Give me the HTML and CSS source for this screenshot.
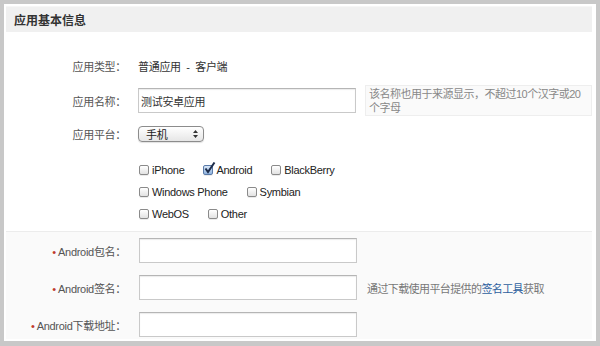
FILE: index.html
```html
<!DOCTYPE html>
<html lang="zh-CN">
<head>
 <meta charset="UTF-8">
 <title>应用基本信息</title>
 <link rel="stylesheet" href="styles.css">
</head>
<body>
 <div class="panel">
  <div class="panel-title">应用基本信息</div>

  <!-- basic info -->
  <div class="section basic">
   <div class="row row-type">
    <span class="label">应用类型：</span>
    <span class="value">普通应用&nbsp; - &nbsp;客户端</span>
   </div>
   <div class="row row-name">
    <span class="label">应用名称：</span>
    <input class="text-input" type="text" value="测试安卓应用">
    <div class="tip">该名称也用于来源显示，不超过10个汉字或20个字母</div>
   </div>
   <div class="row row-platform">
    <span class="label">应用平台：</span>
    <div class="select-box">
     <span>手机</span>
     <svg width="5" height="8" viewBox="0 0 5 8"><path d="M0 3 L2.5 0 L5 3 Z M0 5 L2.5 8 L5 5 Z" fill="#333"/></svg>
    </div>
   </div>
   <div class="platforms">
    <div class="cb-row">
     <label class="cb"><span class="box"></span>iPhone</label>
     <label class="cb"><span class="box checked"><svg width="13" height="13" viewBox="0 0 13 13"><path d="M2.5 6.5 L5 10 L11.5 0.5" fill="none" stroke="#1d2c4a" stroke-width="2"/></svg></span>Android</label>
     <label class="cb"><span class="box"></span>BlackBerry</label>
    </div>
    <div class="cb-row">
     <label class="cb"><span class="box"></span>Windows Phone</label>
     <label class="cb"><span class="box"></span>Symbian</label>
    </div>
    <div class="cb-row">
     <label class="cb"><span class="box"></span>WebOS</label>
     <label class="cb"><span class="box"></span>Other</label>
    </div>
   </div>
  </div>

  <!-- android specific -->
  <div class="section android">
   <div class="row">
    <span class="label"><i class="req">•</i> Android包名：</span>
    <input class="text-input" type="text">
   </div>
   <div class="row">
    <span class="label"><i class="req">•</i> Android签名：</span>
    <input class="text-input" type="text">
    <span class="note">通过下载使用平台提供的<a href="#" class="link">签名工具</a>获取</span>
   </div>
   <div class="row">
    <span class="label"><i class="req">•</i> Android下载地址：</span>
    <input class="text-input" type="text">
   </div>
  </div>
 </div>
</body>
</html>
```

FILE: styles.css
```css
:root {
 --frame-color: #c8c8c8;
 --label-color: #555555;
 --text-color: #333333;
 --hint-color: #888888;
 --link-color: #2d5f9e;
}

html,
body {
 margin: 0;
 padding: 0;
}

body {
 font-family: "Liberation Sans", "Noto Sans CJK SC", sans-serif;
 font-size: 11px;
 letter-spacing: -0.3px;
 color: var(--text-color);
 background: #ffffff;
}

.panel {
 width: 600px;
 height: 346px;
 box-sizing: border-box;
 border: 4px solid var(--frame-color);
 border-bottom-width: 5px;
 padding: 2px 4px 2px 2px;
 background: #ffffff;
 display: flex;
 flex-direction: column;
}

.panel-title {
 height: 26px;
 box-sizing: border-box;
 padding-left: 8px;
 background: #f0f0f0;
 border-top: 1px solid #f6f6f6;
 font-size: 12px;
 font-weight: 700;
 letter-spacing: 0;
 color: #333333;
 display: flex;
 align-items: center;
}

.section {
 display: flex;
 flex-direction: column;
}

.basic {
 height: 199px;
 box-sizing: border-box;
 padding-top: 22px;
}

.row {
 display: flex;
 align-items: center;
}

.label {
 width: 120px;
 flex-shrink: 0;
 margin-right: 12px;
 text-align: right;
 color: var(--label-color);
 white-space: nowrap;
}

.row-type {
 height: 24px;
}

.row-name {
 margin-top: 7px;
 height: 31px;
}

.row-platform {
 margin-top: 10px;
 height: 16px;
}

.text-input {
 width: 218px;
 height: 25px;
 box-sizing: border-box;
 margin: 0;
 padding: 0 2px;
 border: 1px solid #c9c9c9;
 border-top-color: #b5b5b5;
 box-shadow: inset 0 1px 1px rgba(0, 0, 0, 0.08);
 background: #ffffff;
 font-family: inherit;
 font-size: 11px;
 letter-spacing: -0.3px;
 color: var(--text-color);
 outline: none;
}

.tip {
 width: 227px;
 height: 31px;
 box-sizing: border-box;
 margin-left: 9px;
 padding: 1px 3px 0;
 border: 1px solid #eeeeee;
 background: #fafafa;
 color: var(--hint-color);
 line-height: 14px;
 letter-spacing: -0.5px;
}

.select-box {
 width: 66px;
 height: 16px;
 box-sizing: border-box;
 padding: 0 5px 0 7px;
 border: 1px solid #8c8c8c;
 border-radius: 4px;
 background: linear-gradient(#ffffff, #e6e6e6);
 box-shadow: 0 1px 1px rgba(0, 0, 0, 0.12);
 display: flex;
 align-items: center;
 justify-content: space-between;
 font-size: 11px;
 color: #222222;
}

.platforms {
 margin-top: 17px;
 padding-left: 133px;
}

.cb-row {
 height: 22px;
 display: flex;
 align-items: center;
}

.cb-row:last-child {
 height: 21px;
}

.cb {
 display: flex;
 align-items: center;
 margin-right: 19px;
 color: #222222;
 font-size: 11px;
}

.box {
 position: relative;
 width: 10px;
 height: 10px;
 box-sizing: border-box;
 margin-right: 3px;
 border: 1px solid #8a8a8a;
 border-radius: 2px;
 background: linear-gradient(#ffffff, #e2e2e2);
 box-shadow: 0 1px 0 rgba(0, 0, 0, 0.08);
}

.box.checked {
 background: linear-gradient(#d8e7f8, #8fb3df);
 border-color: #5a7aa8;
}

.box svg {
 position: absolute;
 left: -1px;
 top: -4px;
}

/* --- android block --- */
.android {
 flex-grow: 1;
 box-sizing: border-box;
 padding: 6px 0 2px;
 border-top: 1px solid #ececec;
 background: #fafafa;
 gap: 12px;
}

.android .row {
 height: 25px;
}

.android .label {
 margin-right: 13px;
}

.req {
 font-style: normal;
 color: #c0392b;
}

.note {
 margin-left: 10px;
 color: #777777;
 letter-spacing: -0.6px;
}

.link {
 color: var(--link-color);
 text-decoration: none;
}
```
